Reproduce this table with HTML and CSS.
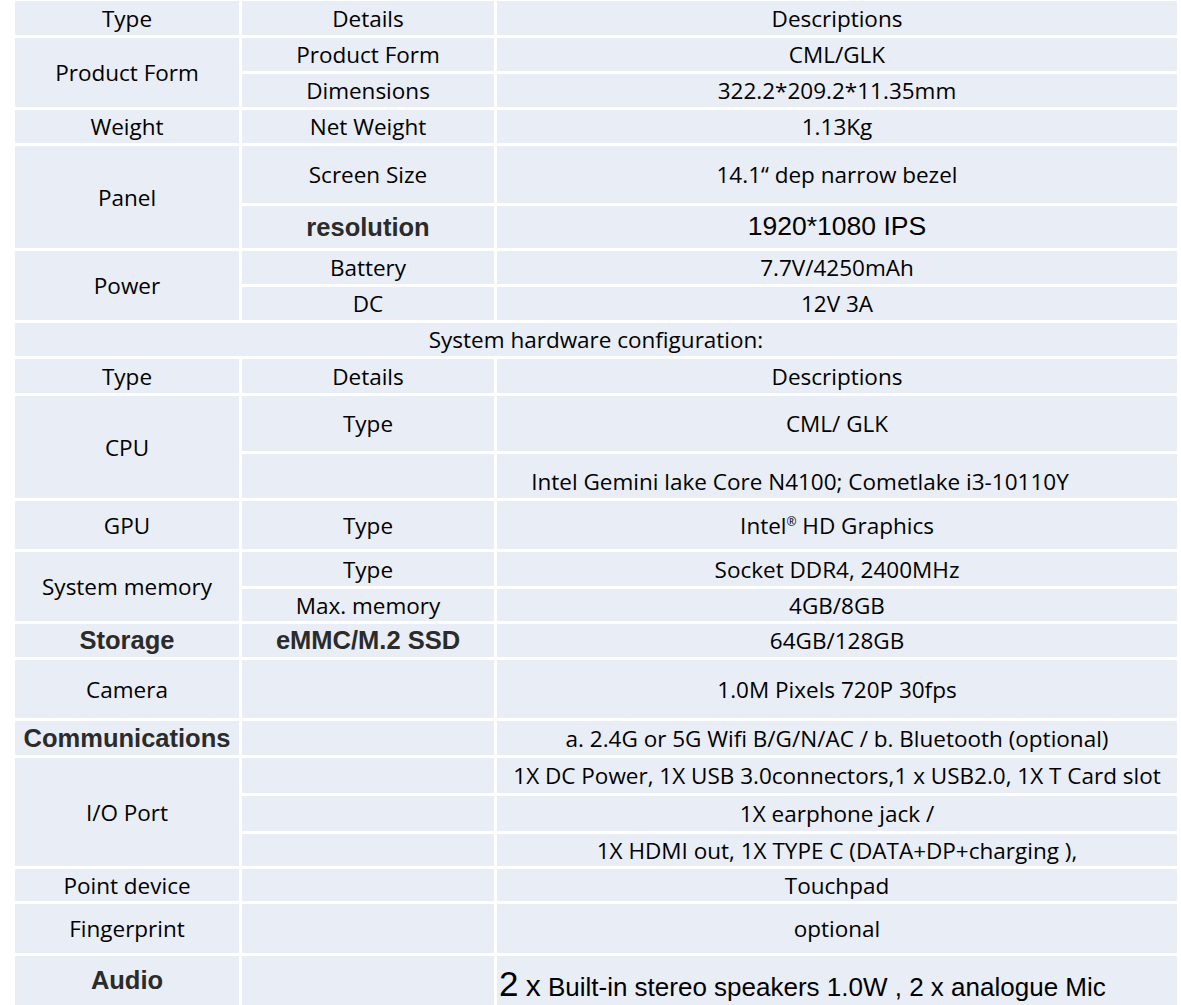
FILE: index.html
```html
<!DOCTYPE html>
<html lang="en">
<head>
    <meta charset="UTF-8">
    <meta name="viewport" content="width=device-width, initial-scale=1.0">
    <title>Specifications</title>
    <link rel="stylesheet" href="styles.css">
</head>
<body>

<table class="spec-table">
    <colgroup>
        <col class="col-type">
        <col class="col-details">
        <col class="col-desc">
    </colgroup>
    <tr class="h37">
        <td>Type</td>
        <td>Details</td>
        <td>Descriptions</td>
    </tr>
    <tr class="h36">
        <td rowspan="2">Product Form</td>
        <td>Product Form</td>
        <td>CML/GLK</td>
    </tr>
    <tr class="h36">
        <td>Dimensions</td>
        <td>322.2*209.2*11.35mm</td>
    </tr>
    <tr class="h36">
        <td>Weight</td>
        <td>Net Weight</td>
        <td>1.13Kg</td>
    </tr>
    <tr class="h60">
        <td rowspan="2">Panel</td>
        <td>Screen Size</td>
        <td>14.1&ldquo; dep narrow bezel</td>
    </tr>
    <tr class="h45">
        <td class="strong">resolution</td>
        <td class="big">1920*1080 IPS</td>
    </tr>
    <tr class="h36">
        <td rowspan="2">Power</td>
        <td>Battery</td>
        <td>7.7V/4250mAh</td>
    </tr>
    <tr class="h36">
        <td>DC</td>
        <td>12V 3A</td>
    </tr>
    <tr class="h36">
        <td colspan="3">System hardware configuration:</td>
    </tr>
    <tr class="h37">
        <td>Type</td>
        <td>Details</td>
        <td>Descriptions</td>
    </tr>
    <tr class="h58">
        <td rowspan="2">CPU</td>
        <td>Type</td>
        <td>CML/ GLK</td>
    </tr>
    <tr class="h47">
        <td></td>
        <td class="low">Intel Gemini lake Core N4100; Cometlake i3-10110Y</td>
    </tr>
    <tr class="h51">
        <td>GPU</td>
        <td>Type</td>
        <td>Intel<sup>&reg;</sup> HD Graphics</td>
    </tr>
    <tr class="h37">
        <td rowspan="2">System memory</td>
        <td>Type</td>
        <td>Socket DDR4, 2400MHz</td>
    </tr>
    <tr class="h35">
        <td>Max. memory</td>
        <td>4GB/8GB</td>
    </tr>
    <tr class="h36">
        <td class="strong">Storage</td>
        <td class="strong">eMMC/M.2 SSD</td>
        <td>64GB/128GB</td>
    </tr>
    <tr class="h61">
        <td>Camera</td>
        <td></td>
        <td>1.0M Pixels 720P 30fps</td>
    </tr>
    <tr class="h37">
        <td class="strong">Communications</td>
        <td></td>
        <td>a. 2.4G or 5G Wifi B/G/N/AC / b. Bluetooth (optional)</td>
    </tr>
    <tr class="h38">
        <td rowspan="3">I/O Port</td>
        <td></td>
        <td>1X DC Power, 1X USB 3.0connectors,1 x USB2.0, 1X T Card slot</td>
    </tr>
    <tr class="h38">
        <td></td>
        <td>1X earphone jack /</td>
    </tr>
    <tr class="h35">
        <td></td>
        <td>1X HDMI out, 1X TYPE C (DATA+DP+charging ),</td>
    </tr>
    <tr class="h35">
        <td>Point device</td>
        <td></td>
        <td>Touchpad</td>
    </tr>
    <tr class="h52">
        <td>Fingerprint</td>
        <td></td>
        <td>optional</td>
    </tr>
    <tr class="h52">
        <td class="strong">Audio</td>
        <td></td>
        <td class="audio"><span class="num">2</span> <span class="times">x</span> Built-in stereo speakers 1.0W , 2 x analogue Mic</td>
    </tr>
</table>

</body>
</html>
```

FILE: styles.css
```css
body {
    margin: 0;
    background: #fff;
}
.spec-table {
    border-collapse: collapse;
    table-layout: fixed;
    width: 1168px;
    margin: -2px 0 0 12px;
    font-family: "Open Sans", sans-serif;
    font-size: 22.5px;
    font-weight: 500;
    color: #000;
}
.col-type {
    width: 227px;
}
.col-details {
    width: 255px;
}
.spec-table td {
    background: #e9edf5;
    border: 3px solid #fff;
    text-align: center;
    vertical-align: middle;
    padding: 0 2px;
    white-space: nowrap;
    line-height: 1.2;
}
.spec-table td.strong {
    font-family: "Liberation Sans", Arial, sans-serif;
    font-weight: bold;
    font-size: 25.5px;
    color: #2b2b2b;
}
.spec-table td.big {
    font-family: "Liberation Sans", Arial, sans-serif;
    font-weight: normal;
    font-size: 26.5px;
}
.spec-table td.low {
    padding: 10px 76px 0 2px;
}
.spec-table td.audio {
    text-align: left;
    font-family: "Liberation Sans", Arial, sans-serif;
    font-weight: normal;
    font-size: 26px;
    padding-top: 6px;
}
.audio .num {
    font-size: 35px;
}
.audio .times {
    font-size: 30px;
}
sup {
    font-size: 12px;
    line-height: 0;
}
.h35 { height: 35px; }
.h36 { height: 36px; }
.h37 { height: 37px; }
.h38 { height: 38px; }
.h45 { height: 45px; }
.h47 { height: 47px; }
.h51 { height: 51px; }
.h52 { height: 52px; }
.h58 { height: 58px; }
.h60 { height: 60px; }
.h61 { height: 61px; }
```
